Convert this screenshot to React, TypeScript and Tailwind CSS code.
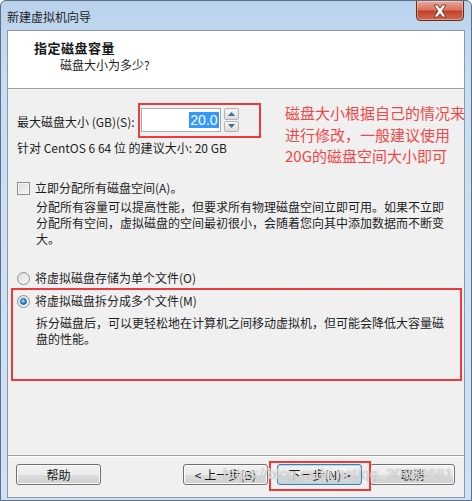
import React from "react";

function Btn({ children, def = false }: { children: React.ReactNode; def?: boolean }) {
  return (
    <div
      className={`w-[85px] h-[21px] shrink-0 rounded-[3px] border flex items-center justify-center text-[12px] leading-none text-[#1a1a1a] bg-[linear-gradient(to_bottom,#f2f2f2_0%,#ebebeb_50%,#dddddd_51%,#cfcfcf_100%)] ${
        def ? "border-[#3c7fb1] shadow-[inset_0_0_0_1px_#a8dcf7]" : "border-[#707070] shadow-[inset_0_0_0_1px_#fcfcfc]"
      }`}
    >
      {children}
    </div>
  );
}

function Radio({ checked = false }: { checked?: boolean }) {
  return (
    <div className="w-[13px] h-[13px] rounded-full border border-[#8e8f8f] bg-[linear-gradient(135deg,#dcdcdc,#f7f7f7)] flex items-center justify-center shrink-0">
      {checked && (
        <div className="w-[7px] h-[7px] rounded-full bg-[radial-gradient(circle_at_40%_35%,#a6e0ff_0%,#3d9ee8_45%,#0d4f94_100%)] border border-[#1b5a9a]" />
      )}
    </div>
  );
}

export default function App() {
  return (
    <div className="relative w-[472px] h-[501px] overflow-hidden font-['Noto_Sans_CJK_SC','Noto_Sans',sans-serif] text-[#1e1e1e] bg-[linear-gradient(to_bottom,#b9d2ec_0%,#c9ddf2_15%,#cfe1f4_100%)] border border-[#5d6f86] rounded-t-[6px]">
      {/* title bar */}
      <div className="h-[29px] flex items-start justify-between pl-[6px]">
        <div className="text-[12px] leading-none mt-[10px] text-[#1e1e1e]">新建虚拟机向导</div>
        <div className="mr-[7px] w-[48px] h-[21px] -mt-px rounded-b-[4px] border border-[#6d2b22] bg-[linear-gradient(to_bottom,#e9a99b_0%,#d9735f_45%,#c4412c_55%,#cf6a4f_100%)] shadow-[inset_0_0_0_1px_rgba(255,255,255,0.35)] flex items-center justify-center">
          <svg width="16" height="14" viewBox="0 0 16 14">
            <path d="M2 1 L5.5 1 L8 4.3 L10.5 1 L14 1 L10 7 L14 13 L10.5 13 L8 9.7 L5.5 13 L2 13 L6 7 Z" fill="#ffffff" stroke="#5a2a24" strokeWidth="0.8" strokeLinejoin="round" />
          </svg>
        </div>
      </div>

      {/* client area */}
      <div className="mx-[6px] h-[468px] flex flex-col bg-[#f0f0f0] border border-[#8a9bb0]">
        {/* header */}
        <div className="h-[58px] shrink-0 bg-white border-b border-[#a0a0a0] flex flex-col">
          <div className="text-[13px] font-bold leading-none mt-[10px] pl-[26px] tracking-[0.5px] text-[#1a1a1a]">指定磁盘容量</div>
          <div className="text-[12px] leading-none mt-[5px] pl-[52px]">磁盘大小为多少?</div>
        </div>

        {/* body */}
        <div className="flex-1 flex flex-col pl-[9px] text-[12px] leading-[16px]">
          <div className="mt-[19px] flex items-center h-[24px]">
            <span className="mt-[3px]">最大磁盘大小 (GB)(S):</span>
            <div className="ml-[6px] w-[80px] h-[24px] bg-white border border-[#abadb3] flex items-center justify-end pr-[1px]">
              <span className="bg-[#3399ff] text-white text-[14px] leading-[16px] px-px font-['Liberation_Sans',sans-serif]">20.0</span>
            </div>
            <div className="ml-[3px] w-[15px] h-[24px] flex flex-col gap-px">
              <div className="h-[11.5px] border border-[#b4b4b4] rounded-[2px] bg-[linear-gradient(to_bottom,#f6f6f6,#dcdcdc)] flex items-center justify-center">
                <svg width="7" height="4" viewBox="0 0 7 4"><path d="M0 4 L3.5 0 L7 4 Z" fill="#4b6a92" /></svg>
              </div>
              <div className="h-[11.5px] border border-[#b4b4b4] rounded-[2px] bg-[linear-gradient(to_bottom,#f6f6f6,#dcdcdc)] flex items-center justify-center">
                <svg width="7" height="4" viewBox="0 0 7 4"><path d="M0 0 L7 0 L3.5 4 Z" fill="#4b6a92" /></svg>
              </div>
            </div>
          </div>
          <div className="mt-[8px]">针对 CentOS 6 64 位 的建议大小: 20 GB</div>

          <div className="mt-[24px] flex items-center gap-[5px]">
            <div className="w-[13px] h-[13px] border border-[#8e8f8f] bg-[linear-gradient(135deg,#dcdcdc,#f8f8f8)] shadow-[inset_0_0_0_1px_#f4f4f4] shrink-0" />
            <span>立即分配所有磁盘空间(A)。</span>
          </div>
          <div className="mt-[3px] pl-[19px]">
            分配所有容量可以提高性能，但要求所有物理磁盘空间立即可用。如果不立即
            <br />
            分配所有空间，虚拟磁盘的空间最初很小，会随着您向其中添加数据而不断变
            <br />
            大。
          </div>

          <div className="mt-[23px] flex items-center gap-[5px]">
            <Radio />
            <span>将虚拟磁盘存储为单个文件(O)</span>
          </div>
          <div className="mt-[7px] flex items-center gap-[5px]">
            <Radio checked />
            <span>将虚拟磁盘拆分成多个文件(M)</span>
          </div>
          <div className="mt-[6px] pl-[19px]">
            拆分磁盘后，可以更轻松地在计算机之间移动虚拟机，但可能会降低大容量磁
            <br />
            盘的性能。
          </div>
        </div>

        {/* separator */}
        <div className="h-[2px] shrink-0 border-t border-[#a0a0a0] border-b border-b-white" />

        {/* buttons */}
        <div className="h-[40px] shrink-0 flex items-start pt-[7px] pl-[8px] pr-[9px]">
          <Btn>帮助</Btn>
          <div className="flex-1" />
          <div className="flex gap-[9px]">
            <Btn>&lt; 上一步(B)</Btn>
            <Btn def>下一步(N) &gt;</Btn>
          </div>
          <div className="ml-[8px]">
            <Btn>取消</Btn>
          </div>
        </div>
      </div>

      {/* annotations */}
      <div className="absolute left-[137px] top-[102px] w-[123px] h-[35px] border-2 border-[#f03a3a]" />
      <div className="absolute left-[284px] top-[101px] text-[15px] leading-[21.5px] text-[#f04848]">
        磁盘大小根据自己的情况来
        <br />
        进行修改，一般建议使用
        <br />
        20G的磁盘空间大小即可
      </div>
      <div className="absolute left-[10px] top-[287px] w-[451px] h-[93px] border-2 border-[#f03a3a]" />
      <div className="absolute left-[268px] top-[460px] w-[102px] h-[30px] border-2 border-[#f03a3a]" />

      {/* watermark */}
      <div className="absolute left-[222px] top-[463px] text-[15px] leading-[20px] font-['Liberation_Sans',sans-serif] text-white/70 [text-shadow:0_0_1px_#8a8a8a]">
        https://blog.csdn.net/qq_30869661
      </div>
    </div>
  );
}
